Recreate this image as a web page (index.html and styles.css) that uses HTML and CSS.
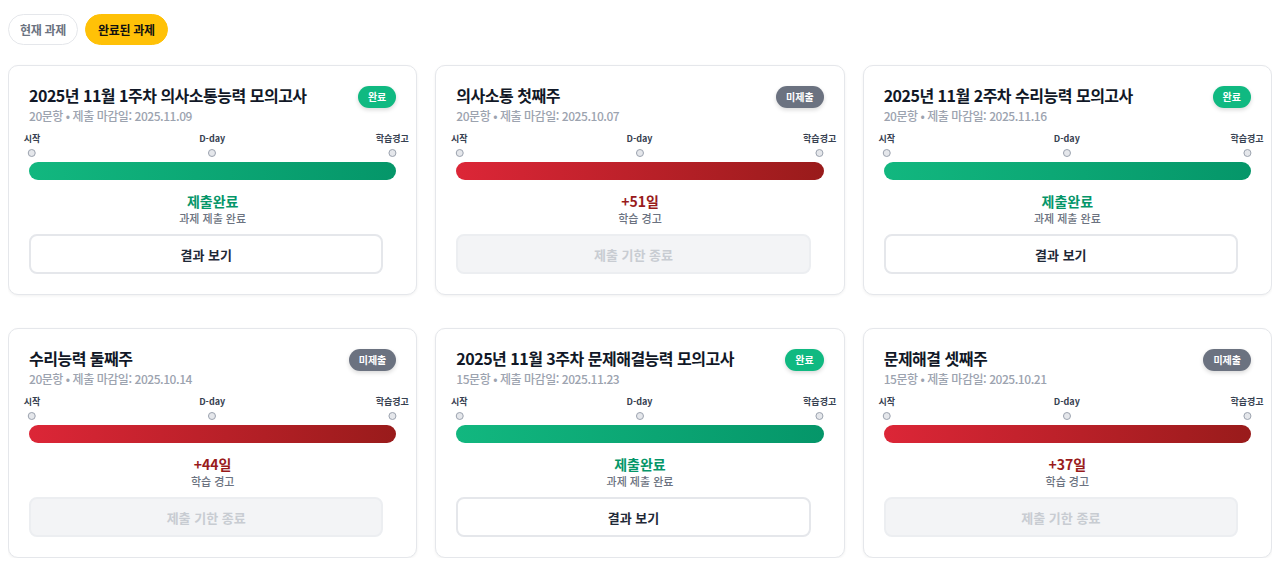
FILE: index.html
```html
<!DOCTYPE html>
<html lang="ko">
<head>
<meta charset="utf-8">
<title>완료된 과제</title>
<link rel="stylesheet" href="styles.css">
</head>
<body>
<div class="page">
  <div class="tabs">
    <button class="tab">현재 과제</button>
    <button class="tab tab-active">완료된 과제</button>
  </div>
  <div class="grid">
    <div class="card">
      <div class="card-head">
        <div class="head-text">
          <h3 class="title">2025년 11월 1주차 의사소통능력 모의고사</h3>
          <p class="meta">20문항 • 제출 마감일: 2025.11.09</p>
        </div>
        <span class="badge badge-done">완료</span>
      </div>
      <div class="timeline">
        <div class="marks">
          <div class="mark m-start"><span class="mlabel">시작</span><span class="dot"></span></div>
          <div class="mark m-mid"><span class="mlabel">D-day</span><span class="dot"></span></div>
          <div class="mark m-end"><span class="mlabel">학습경고</span><span class="dot"></span></div>
        </div>
        <div class="bar bar-green"></div>
      </div>
      <div class="status">
        <div class="status-main green">제출완료</div>
        <div class="status-sub">과제 제출 완료</div>
      </div>
      <button class="btn">결과 보기</button>
    </div>

    <div class="card">
      <div class="card-head">
        <div class="head-text">
          <h3 class="title">의사소통 첫째주</h3>
          <p class="meta">20문항 • 제출 마감일: 2025.10.07</p>
        </div>
        <span class="badge badge-miss">미제출</span>
      </div>
      <div class="timeline">
        <div class="marks">
          <div class="mark m-start"><span class="mlabel">시작</span><span class="dot"></span></div>
          <div class="mark m-mid"><span class="mlabel">D-day</span><span class="dot"></span></div>
          <div class="mark m-end"><span class="mlabel">학습경고</span><span class="dot"></span></div>
        </div>
        <div class="bar bar-red"></div>
      </div>
      <div class="status">
        <div class="status-main red">+51일</div>
        <div class="status-sub">학습 경고</div>
      </div>
      <button class="btn btn-disabled" disabled>제출 기한 종료</button>
    </div>

    <div class="card">
      <div class="card-head">
        <div class="head-text">
          <h3 class="title">2025년 11월 2주차 수리능력 모의고사</h3>
          <p class="meta">20문항 • 제출 마감일: 2025.11.16</p>
        </div>
        <span class="badge badge-done">완료</span>
      </div>
      <div class="timeline">
        <div class="marks">
          <div class="mark m-start"><span class="mlabel">시작</span><span class="dot"></span></div>
          <div class="mark m-mid"><span class="mlabel">D-day</span><span class="dot"></span></div>
          <div class="mark m-end"><span class="mlabel">학습경고</span><span class="dot"></span></div>
        </div>
        <div class="bar bar-green"></div>
      </div>
      <div class="status">
        <div class="status-main green">제출완료</div>
        <div class="status-sub">과제 제출 완료</div>
      </div>
      <button class="btn">결과 보기</button>
    </div>

    <div class="card">
      <div class="card-head">
        <div class="head-text">
          <h3 class="title">수리능력 둘째주</h3>
          <p class="meta">20문항 • 제출 마감일: 2025.10.14</p>
        </div>
        <span class="badge badge-miss">미제출</span>
      </div>
      <div class="timeline">
        <div class="marks">
          <div class="mark m-start"><span class="mlabel">시작</span><span class="dot"></span></div>
          <div class="mark m-mid"><span class="mlabel">D-day</span><span class="dot"></span></div>
          <div class="mark m-end"><span class="mlabel">학습경고</span><span class="dot"></span></div>
        </div>
        <div class="bar bar-red"></div>
      </div>
      <div class="status">
        <div class="status-main red">+44일</div>
        <div class="status-sub">학습 경고</div>
      </div>
      <button class="btn btn-disabled" disabled>제출 기한 종료</button>
    </div>

    <div class="card">
      <div class="card-head">
        <div class="head-text">
          <h3 class="title">2025년 11월 3주차 문제해결능력 모의고사</h3>
          <p class="meta">15문항 • 제출 마감일: 2025.11.23</p>
        </div>
        <span class="badge badge-done">완료</span>
      </div>
      <div class="timeline">
        <div class="marks">
          <div class="mark m-start"><span class="mlabel">시작</span><span class="dot"></span></div>
          <div class="mark m-mid"><span class="mlabel">D-day</span><span class="dot"></span></div>
          <div class="mark m-end"><span class="mlabel">학습경고</span><span class="dot"></span></div>
        </div>
        <div class="bar bar-green"></div>
      </div>
      <div class="status">
        <div class="status-main green">제출완료</div>
        <div class="status-sub">과제 제출 완료</div>
      </div>
      <button class="btn">결과 보기</button>
    </div>

    <div class="card">
      <div class="card-head">
        <div class="head-text">
          <h3 class="title">문제해결 셋째주</h3>
          <p class="meta">15문항 • 제출 마감일: 2025.10.21</p>
        </div>
        <span class="badge badge-miss">미제출</span>
      </div>
      <div class="timeline">
        <div class="marks">
          <div class="mark m-start"><span class="mlabel">시작</span><span class="dot"></span></div>
          <div class="mark m-mid"><span class="mlabel">D-day</span><span class="dot"></span></div>
          <div class="mark m-end"><span class="mlabel">학습경고</span><span class="dot"></span></div>
        </div>
        <div class="bar bar-red"></div>
      </div>
      <div class="status">
        <div class="status-main red">+37일</div>
        <div class="status-sub">학습 경고</div>
      </div>
      <button class="btn btn-disabled" disabled>제출 기한 종료</button>
    </div>
  </div>
</div>
</body>
</html>
```

FILE: styles.css
```css
* { box-sizing: border-box; }

body {
  margin: 8px;
  background: #ffffff;
  font-family: "Noto Sans CJK KR", "Noto Sans", sans-serif;
  color: #111827;
}

.page {
  padding-top: 6px;
}

.tabs {
  display: flex;
  gap: 7px;
  margin-bottom: 20px;
}

.tab {
  height: 31px;
  padding: 0 11px;
  border-radius: 16px;
  border: 1px solid #e5e7eb;
  background: #ffffff;
  color: #6b7280;
  font-family: inherit;
  font-size: 12px;
  font-weight: 700;
  line-height: 1;
  letter-spacing: -0.3px;
}

.tab-active {
  background: #ffc107;
  border-color: #ffc107;
  color: #111111;
  padding: 0 12px;
}

.grid {
  display: grid;
  grid-template-columns: repeat(3, 1fr);
  column-gap: 18px;
  row-gap: 33px;
}

.card {
  border: 1px solid #e5e7eb;
  border-radius: 10px;
  background: #ffffff;
  box-shadow: 0 1px 3px rgba(0, 0, 0, 0.06);
  padding: 20px;
  display: flex;
  flex-direction: column;
}

.card-head {
  display: flex;
  justify-content: space-between;
  align-items: flex-start;
}

.title {
  margin: 0;
  font-size: 16px;
  font-weight: 700;
  line-height: 18px;
  letter-spacing: -0.5px;
  color: #111827;
}

.meta {
  margin: 3px 0 0;
  font-size: 12px;
  line-height: 18px;
  font-weight: 500;
  letter-spacing: -0.45px;
  color: #9ca3af;
}

.badge {
  flex: none;
  height: 22px;
  padding: 0 10px;
  border-radius: 11px;
  font-size: 10px;
  font-weight: 700;
  line-height: 22px;
  color: #ffffff;
  box-shadow: 0 2px 4px rgba(0, 0, 0, 0.15);
}

.badge-done { background: #10b981; }
.badge-miss { background: #6b7280; }

.timeline {
  margin-top: 7px;
}

.marks {
  position: relative;
  height: 28px;
  margin: 0 4px 0 3px;
}

.mark {
  position: absolute;
  top: 0;
  display: flex;
  flex-direction: column;
  align-items: center;
  transform: translateX(-50%);
}

.m-start { left: 0; }
.m-mid { left: 50%; }
.m-end { left: 100%; }

.mlabel {
  font-size: 9px;
  line-height: 13px;
  font-weight: 700;
  color: #374151;
  white-space: nowrap;
}

.dot {
  margin-top: 4px;
  width: 8px;
  height: 8px;
  border-radius: 50%;
  background: #e5e7eb;
  border: 1.5px solid #9ca3af;
}

.bar {
  height: 18px;
  border-radius: 9px;
  margin-top: 2px;
}

.bar-green {
  background: linear-gradient(90deg, #12b77f 0%, #059669 100%);
}

.bar-red {
  background: linear-gradient(90deg, #dc2637 0%, #991b1b 100%);
}

.status {
  margin-top: 12px;
  text-align: center;
}

.status-main {
  font-size: 14px;
  font-weight: 700;
  line-height: 18px;
}

.status-main.green { color: #059669; }
.status-main.red { color: #991b1b; }

.status-sub {
  margin-top: 1px;
  font-size: 11px;
  line-height: 15px;
  color: #6b7280;
  font-weight: 500;
}

.btn {
  margin-top: 8px;
  margin-right: 13px;
  height: 40px;
  border-radius: 8px;
  border: 2px solid #e5e7eb;
  background: #ffffff;
  color: #1f2937;
  font-family: inherit;
  font-size: 13px;
  font-weight: 700;
}

.btn-disabled {
  background: #f3f4f6;
  border-color: #eceef1;
  color: #c8ccd2;
}
```
